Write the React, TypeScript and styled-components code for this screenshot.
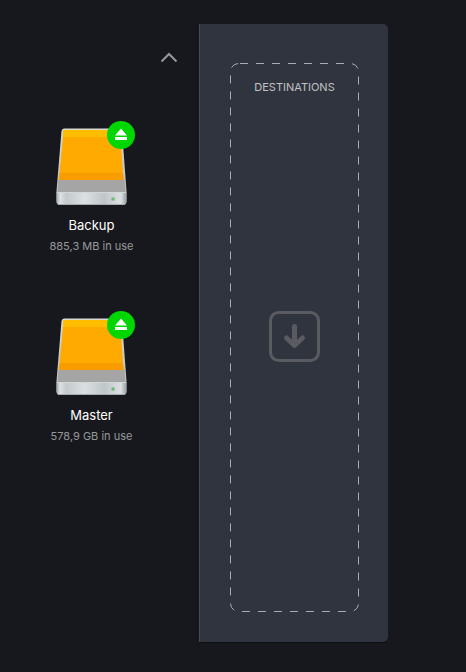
import React from "react";
import styled, { createGlobalStyle } from "styled-components";

const GlobalStyle = createGlobalStyle`
  * {
    box-sizing: border-box;
  }

  body {
    margin: 0;
    background: #17181d;
    font-family: Inter, "Liberation Sans", sans-serif;
  }
`;

const Page = styled.main`
  display: grid;
  grid-template-columns: 199fr 189fr 78fr;
  min-height: 100vh;
  padding: 24px 0 30px;
`;

const Sources = styled.section`
  display: flex;
  flex-direction: column;
  padding: 20px 16px 0 0;
`;

const CollapseButton = styled.button`
  display: grid;
  place-items: center;
  align-self: flex-end;
  width: 28px;
  height: 28px;
  padding: 0;
  border: 0;
  background: none;
  color: #96979a;
  cursor: pointer;
`;

const DriveList = styled.ul`
  display: flex;
  flex-direction: column;
  gap: 60px;
  margin: 55px 0 0;
  padding: 0;
  list-style: none;
`;

const DriveItem = styled.li`
  display: flex;
  flex-direction: column;
  align-items: center;
  text-align: center;
`;

const DriveArt = styled.div`
  position: relative;
  width: 72px;
  height: 80px;
  margin-bottom: 8px;

  > svg {
    display: block;
  }
`;

const EjectButton = styled.button`
  position: absolute;
  top: -6px;
  right: -7px;
  display: grid;
  place-items: center;
  width: 28px;
  height: 28px;
  padding: 0;
  border: 0;
  border-radius: 50%;
  background: #00d600;
  color: #fff;
  cursor: pointer;
`;

const DriveName = styled.span`
  color: #fff;
  font-size: 13px;
  line-height: 20px;
`;

const DriveUsage = styled.span`
  color: #97989c;
  font-size: 11px;
  line-height: 22px;
`;

const Panel = styled.section`
  display: flex;
  padding: 39px 29px 30px 30px;
  border-left: 1px solid #4b4c52;
  border-radius: 0 5px 5px 0;
  background: #30343f;
  box-shadow: 0 1px 0 #0c0d10;
`;

const DropZone = styled.div`
  position: relative;
  flex: 1;
  display: grid;
  grid-template-rows: 1fr auto 1fr;
  justify-items: center;
  padding-bottom: 2px;
`;

const DashedOutline = styled.svg`
  position: absolute;
  inset: 0;
  width: 100%;
  height: 100%;
  overflow: visible;
  pointer-events: none;

  rect {
    width: calc(100% - 1px);
    height: calc(100% - 1px);
  }
`;

const PanelTitle = styled.h2`
  margin: 16px 0 0;
  color: #c0c2c3;
  font-size: 11px;
  font-weight: 400;
  line-height: 16px;
`;

const Chevron = () => (
  <svg width="18" height="12" viewBox="0 0 18 12" fill="none" aria-hidden="true">
    <path d="M1.5 9.5 9 2 16.5 9.5" stroke="currentColor" strokeWidth="2" />
  </svg>
);

const EjectIcon = () => (
  <svg width="14" height="14" viewBox="0 0 14 14" fill="currentColor" aria-hidden="true">
    <path d="M7 0.500 13 7.500H1Z" />
    <path d="M1 9h12v3H1z" />
  </svg>
);

const DriveIcon = ({ id }: { id: string }) => (
  <svg width="72" height="80" viewBox="0 0 72 80" aria-hidden="true">
    <defs>
      <linearGradient id={`${id}-front`} x1="0" x2="1" y1="0" y2="0">
        <stop offset="0" stopColor="#9fa6a7" />
        <stop offset="0.05" stopColor="#dfe3e5" />
        <stop offset="0.14" stopColor="#c3c9cc" />
        <stop offset="0.4" stopColor="#dce0e2" />
        <stop offset="0.68" stopColor="#bfc6c9" />
        <stop offset="0.92" stopColor="#dde0e2" />
        <stop offset="1" stopColor="#959d9e" />
      </linearGradient>
      <linearGradient id={`${id}-edge`} x1="0" x2="0" y1="0" y2="1">
        <stop offset="0" stopColor="#d9d9d0" />
        <stop offset="1" stopColor="#b8bcbc" />
      </linearGradient>
      <clipPath id={`${id}-label`}>
        <path d="M7.500 3H64L67.500 53H3Z" />
      </clipPath>
    </defs>
    <path
      d="M8 1.500H63Q65.500 1.500 66 4L70.500 64V74Q70.500 78 67 78H4Q.5 78 .5 74V64L5.500 4Q6 1.500 8 1.500Z"
      fill={`url(#${id}-edge)`}
    />
    <path d="M2.500 52.500H68.500L69.500 65H1.500Z" fill="#a5a5a5" />
    <g clipPath={`url(#${id}-label)`}>
      <path d="M0 2H72V53H0Z" fill="#ffaa00" />
      <path d="M0 2H72V10H0Z" fill="#ffbd00" />
      <path d="M0 46H72V53H0Z" fill="#f99c00" />
    </g>
    <path d="M.5 65H70.500V74Q70.500 78 67 78H4Q.5 78 .5 74Z" fill={`url(#${id}-front)`} />
    <path d="M1 65.500H70" stroke="#d4d7d8" />
    <path d="M3 77.500H68" stroke="#a7adaf" />
    <circle cx="57" cy="72" r="2" fill="#96b69c" />
    <circle cx="57" cy="72" r="1" fill="#4ecb58" />
  </svg>
);

const DropIcon = () => (
  <svg width="51" height="51" viewBox="0 0 51 51" fill="none" stroke="#5a5b61" role="img" aria-label="Drop here">
    <rect x="1.500" y="1.500" width="48" height="48" rx="8" strokeWidth="3" />
    <path d="M25.500 15.500V34M17.500 27 25.500 34.500 33.500 27" strokeWidth="5" strokeLinecap="round" strokeLinejoin="round" />
  </svg>
);

const drives = [
  { name: "Backup", usage: "885,3 MB in use" },
  { name: "Master", usage: "578,9 GB in use" },
];

export default function App() {
  return (
    <>
      <GlobalStyle />
      <Page>
        <Sources aria-label="Sources">
          <CollapseButton type="button" aria-label="Collapse">
            <Chevron />
          </CollapseButton>
          <DriveList>
            {drives.map(({ name, usage }) => (
              <DriveItem key={name}>
                <DriveArt>
                  <DriveIcon id={name.toLowerCase()} />
                  <EjectButton type="button" aria-label={`Eject ${name}`}>
                    <EjectIcon />
                  </EjectButton>
                </DriveArt>
                <DriveName>{name}</DriveName>
                <DriveUsage>{usage}</DriveUsage>
              </DriveItem>
            ))}
          </DriveList>
        </Sources>
        <Panel aria-labelledby="destinations-title">
          <DropZone>
            <DashedOutline aria-hidden="true">
              <rect x="0.5" y="0.5" rx="8" fill="none" stroke="#aaabad" strokeDasharray="8 8" strokeDashoffset="-1.5" />
            </DashedOutline>
            <PanelTitle id="destinations-title">DESTINATIONS</PanelTitle>
            <DropIcon />
          </DropZone>
        </Panel>
      </Page>
    </>
  );
}
